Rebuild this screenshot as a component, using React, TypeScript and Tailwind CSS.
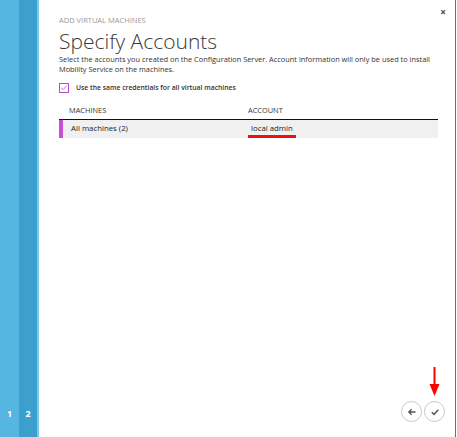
import { Check } from "lucide-react";

const font = { fontFamily: '"Open Sans", "Noto Sans", sans-serif' };

export default function App() {
  return (
    <div
      className="flex h-[437px] w-[457px] overflow-hidden bg-white font-['Open_Sans',sans-serif]"
      style={font}
    >
      {/* wizard steps */}
      <div className="flex h-full flex-none">
        <div className="flex w-[19px] flex-col justify-end bg-[#55b6e2] pb-[17px] text-center text-[9px] font-bold text-white">
          1
        </div>
        <div className="flex w-[18px] flex-col justify-end bg-[#3d9fcd] pb-[17px] text-center text-[9px] font-bold text-white">
          2
        </div>
        <div className="w-[2px] bg-[#7cc8ec]" />
      </div>

      <div className="relative flex flex-1 flex-col border-r border-[#6e6e6e] pl-[20px] pr-[17px]">
        <button className="absolute right-[9px] top-[7px] text-[10px] font-bold leading-none text-[#444]">
          ×
        </button>

        <p className="mt-[15px] text-[7.5px] uppercase leading-[10px] text-[#9a9a9a]">
          Add virtual machines
        </p>
        <h1 className="mt-[4px] text-[21px] font-light leading-[24px] text-[#3a3a3a]">
          Specify Accounts
        </h1>
        <p className="mt-[1px] text-[7.4px] leading-[10px] text-[#333]">
          Select the accounts you created on the Configuration Server. Account information will only be used to install
          <br />
          Mobility Service on the machines.
        </p>

        <label className="mt-[9px] flex items-center gap-[7px]">
          <span className="flex h-[10px] w-[10px] items-center justify-center border border-[#b04cc4]">
            <Check size={8} strokeWidth={2.5} className="text-[#b04cc4]" />
          </span>
          <span className="text-[6.8px] font-semibold text-[#333]">
            Use the same credentials for all virtual machines
          </span>
        </label>

        <div className="mt-[12px] grid grid-cols-[189px_1fr] pb-[3px] text-[7.4px] uppercase text-[#333]">
          <span className="pl-[10px]">Machines</span>
          <span>Account</span>
        </div>
        <div className="flex h-[19px] border-t border-[#111] bg-[#f0f0f0] text-[7.8px] text-[#222]">
          <div className="w-[4px] bg-[#c94ed6]" />
          <div className="grid flex-1 grid-cols-[185px_1fr] items-center">
            <span className="pl-[8px]">All machines (2)</span>
            <span className="relative pl-[3px]">
              local admin
              <span className="absolute left-[0px] top-[12px] h-[3px] w-[48px] bg-[#ee1111]" />
            </span>
          </div>
        </div>

        <div className="mt-auto mb-[15px] flex justify-end gap-[2px]">
          <button className="flex h-[21px] w-[21px] items-center justify-center rounded-full border-[1.5px] border-[#c8c8c8] text-[#555]">
            <svg width="10" height="10" viewBox="0 0 10 10" fill="none" stroke="currentColor" strokeWidth="1.4">
              <path d="M8.5 5H1.8M4.6 2.2 1.8 5l2.8 2.8" />
            </svg>
          </button>
          <button className="relative -mr-[7px] flex h-[21px] w-[21px] items-center justify-center rounded-full border-[1.5px] border-[#c8c8c8] text-[#555]">
            <svg width="10" height="10" viewBox="0 0 10 10" fill="none" stroke="currentColor" strokeWidth="1.5">
              <path d="M1.8 5.2 4 7.4 8.3 2.8" />
            </svg>
            <svg
              className="absolute bottom-[25px] left-[4px]"
              width="11"
              height="29"
              viewBox="0 0 11 29"
            >
              <rect x="4.5" y="0" width="2" height="19" fill="#f00" />
              <path d="M0.5 17h10L5.5 29z" fill="#f00" />
            </svg>
          </button>
        </div>
      </div>
      <div className="w-[1px] bg-white" />
    </div>
  );
}
